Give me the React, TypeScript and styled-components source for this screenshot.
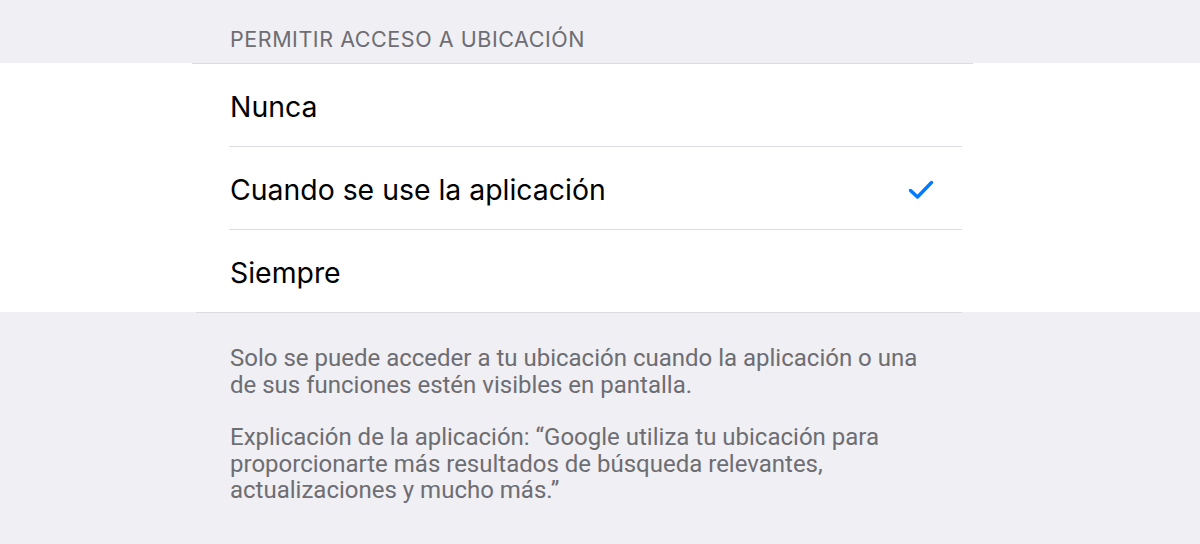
import styled, { createGlobalStyle } from "styled-components";

interface LineProps {
  $left: number;
  $width: number;
}

const GlobalStyle = createGlobalStyle`
  html, body {
    margin: 0;
    padding: 0;
    background-color: #efeff4;
  }
  body {
    font-family: Inter, "Liberation Sans", Arial, sans-serif;
    -webkit-font-smoothing: antialiased;
  }
`;

const Screen = styled.div`
  width: 1200px;
  height: 544px;
  overflow: hidden;
  background-color: #efeff4;
`;

const SectionHeader = styled.div`
  height: 63px;
  box-sizing: border-box;
  padding: 26px 0 0 230px;
  font-size: 21.5px;
  letter-spacing: 0.55px;
  color: #6d6d72;
  line-height: 26px;
`;

const Group = styled.div`
  background-color: #ffffff;
  display: flex;
  flex-direction: column;
`;

const Line = styled.div`
  height: 1px;
  margin-left: ${(props: LineProps) => props.$left}px;
  width: ${(props: LineProps) => props.$width}px;
  background-color: #dcdce0;
`;

const Row = styled.div`
  height: 82px;
  box-sizing: border-box;
  padding: 3px 0 0 230px;
  display: flex;
  align-items: center;
  font-size: 28.4px;
  color: #000000;
`;

const RowLabel = styled.span`
  flex: 1;
`;

const Check = styled.svg`
  width: 26px;
  height: 20px;
  margin-right: 266px;
`;

const Footer = styled.div`
  padding: 32px 0 0 230px;
  display: flex;
  flex-direction: column;
  gap: 26px;
`;

const FooterText = styled.p`
  margin: 0;
  width: 700px;
  font-family: Roboto, "Liberation Sans", Arial, sans-serif;
  font-size: 24px;
  line-height: 26.5px;
  color: #6d6d72;
`;

const options = ["Nunca", "Cuando se use la aplicación", "Siempre"];

export default function App() {
  return (
    <Screen>
      <GlobalStyle />
      <SectionHeader>PERMITIR ACCESO A UBICACIÓN</SectionHeader>
      <Group>
        <Line $left={192} $width={781} />
        {options.map((label, i) => (
          <div key={label}>
            <Row>
              <RowLabel>{label}</RowLabel>
              {i === 1 && (
                <Check viewBox="0 0 26 20">
                  <path
                    d="M2.5 10.5 L9.5 17 L23.5 2.5"
                    fill="none"
                    stroke="#007aff"
                    strokeWidth="3.4"
                    strokeLinecap="round"
                    strokeLinejoin="round"
                  />
                </Check>
              )}
            </Row>
            {i < options.length - 1 && <Line $left={229} $width={733} />}
          </div>
        ))}
      </Group>
      <Line $left={196} $width={766} />
      <Footer>
        <FooterText>
          Solo se puede acceder a tu ubicación cuando la aplicación o una
          <br />
          de sus funciones estén visibles en pantalla.
        </FooterText>
        <FooterText>
          Explicación de la aplicación: “Google utiliza tu ubicación para
          <br />
          proporcionarte más resultados de búsqueda relevantes,
          <br />
          actualizaciones y mucho más.”
        </FooterText>
      </Footer>
    </Screen>
  );
}
